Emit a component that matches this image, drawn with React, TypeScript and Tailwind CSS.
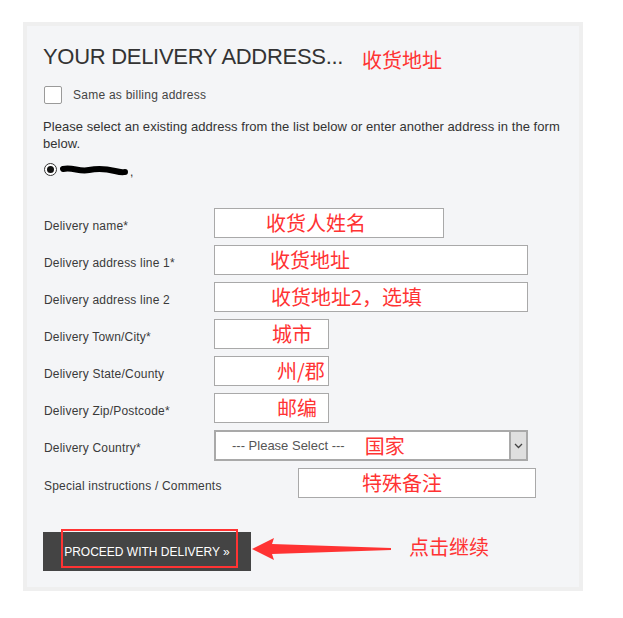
import React from 'react';

const sans = 'font-["Liberation_Sans",Arial,sans-serif]';
const cjk = 'font-["Noto_Sans_CJK_SC",sans-serif] text-[#f33]';

function Field({ label, labelW = 'w-[171px]', children }: { label: string; labelW?: string; children: React.ReactNode }) {
  return (
    <div className="flex items-start">
      <label className={`${labelW} shrink-0 mt-[10px] pl-px text-[12px] leading-[17px] tracking-[0.2px] text-[#3a3a3a]`}>{label}</label>
      {children}
    </div>
  );
}

function Box({ w, pl, text }: { w: string; pl: string; text: string }) {
  return (
    <div className={`${w} h-[30px] bg-white border border-[#a9a9a9] ${pl} ${cjk} text-[20px] leading-[28px] whitespace-nowrap`}>
      {text}
    </div>
  );
}

export default function App() {
  return (
    <div className={`min-h-[618px] bg-white pt-[22px] pl-[23px] ${sans}`}>
      <div className="w-[560px] h-[569px] border-4 border-[#efefef] bg-[#f4f5f7] pt-[18px] px-4">
        <div className="flex items-center h-[25px]">
          <h2 className="text-[22px] leading-[25px] tracking-[-0.3px] text-[#333]">YOUR DELIVERY ADDRESS...</h2>
          <span className={`${cjk} ml-[19px] text-[20px] leading-[25px] mt-[5px]`}>收货地址</span>
        </div>

        <div className="flex items-center mt-[17px] h-[18px]">
          <span className="ml-px w-[18px] h-[18px] bg-white border border-[#9a9a9a] rounded-[2px]" />
          <span className="ml-[11px] text-[12px] tracking-[0.25px] text-[#444]">Same as billing address</span>
        </div>

        <p className="mt-[14px] text-[13px] leading-[17px] tracking-[0.05px] text-[#333]">
          Please select an existing address from the list below or enter another address in the form below.
        </p>

        <div className="flex items-center mt-[11px] h-[13px]">
          <span className="ml-px w-[13px] h-[13px] rounded-full bg-white border border-[#333] flex items-center justify-center">
            <span className="w-[7px] h-[7px] rounded-full bg-[#111]" />
          </span>
          <svg width="70" height="12" viewBox="0 0 70 12" className="ml-[2px]">
            <path d="M4 5 C 14 3, 20 8, 30 6 S 48 5, 56 7 S 64 8, 66 8" stroke="#000" strokeWidth="6" fill="none" strokeLinecap="round" />
          </svg>
          <span className="text-[12px] text-[#333] ml-[1px] mt-[4px]">,</span>
        </div>

        <div className="mt-[32px] flex flex-col gap-[7px]">
          <Field label="Delivery name*">
            <Box w="w-[230px]" pl="pl-[51px]" text="收货人姓名" />
          </Field>
          <Field label="Delivery address line 1*">
            <Box w="w-[314px]" pl="pl-[55px]" text="收货地址" />
          </Field>
          <Field label="Delivery address line 2">
            <Box w="w-[314px]" pl="pl-[56px]" text="收货地址2，选填" />
          </Field>
          <Field label="Delivery Town/City*">
            <Box w="w-[115px]" pl="pl-[57px]" text="城市" />
          </Field>
          <Field label="Delivery State/County">
            <Box w="w-[115px]" pl="pl-[62px]" text="州/郡" />
          </Field>
          <Field label="Delivery Zip/Postcode*">
            <Box w="w-[115px]" pl="pl-[62px]" text="邮编" />
          </Field>
          <Field label="Delivery Country*">
            <div className="w-[314px] h-[31px] bg-white border-2 border-[#a9a9a9] flex items-stretch">
              <span className="pl-[16px] text-[13px] leading-[27px] text-[#555] whitespace-nowrap">--- Please Select ---</span>
              <span className={`${cjk} ml-[20px] text-[20px] leading-[27px]`}>国家</span>
              <span className="ml-auto w-[17px] bg-[#dfdfdf] border-l-2 border-[#a9a9a9] flex items-center justify-center">
                <svg width="9" height="6" viewBox="0 0 9 6">
                  <path d="M1 1 L4.5 4.5 L8 1" stroke="#444" strokeWidth="1.3" fill="none" />
                </svg>
              </span>
            </div>
          </Field>
          <Field label="Special instructions / Comments" labelW="w-[255px]">
            <Box w="w-[238px]" pl="pl-[63px]" text="特殊备注" />
          </Field>
        </div>

        <div className="mt-[34px] flex items-start">
          <button className="relative w-[208px] h-[39px] bg-[#444] text-white text-[12px] uppercase flex items-center justify-center">
            PROCEED WITH DELIVERY »
            <span className="absolute left-[18px] top-[-3px] w-[177px] h-[39px] border-2 border-[#f33]" />
          </button>
          <svg width="140" height="24" viewBox="0 0 140 24" className="mt-[5px]">
            <polygon points="1,12 23,1 21,7 140,11 140,13 21,17 23,23" fill="#f33" />
          </svg>
          <span className={`${cjk} ml-[18px] mt-[3px] text-[20px] leading-[24px]`}>点击继续</span>
        </div>
      </div>
    </div>
  );
}
